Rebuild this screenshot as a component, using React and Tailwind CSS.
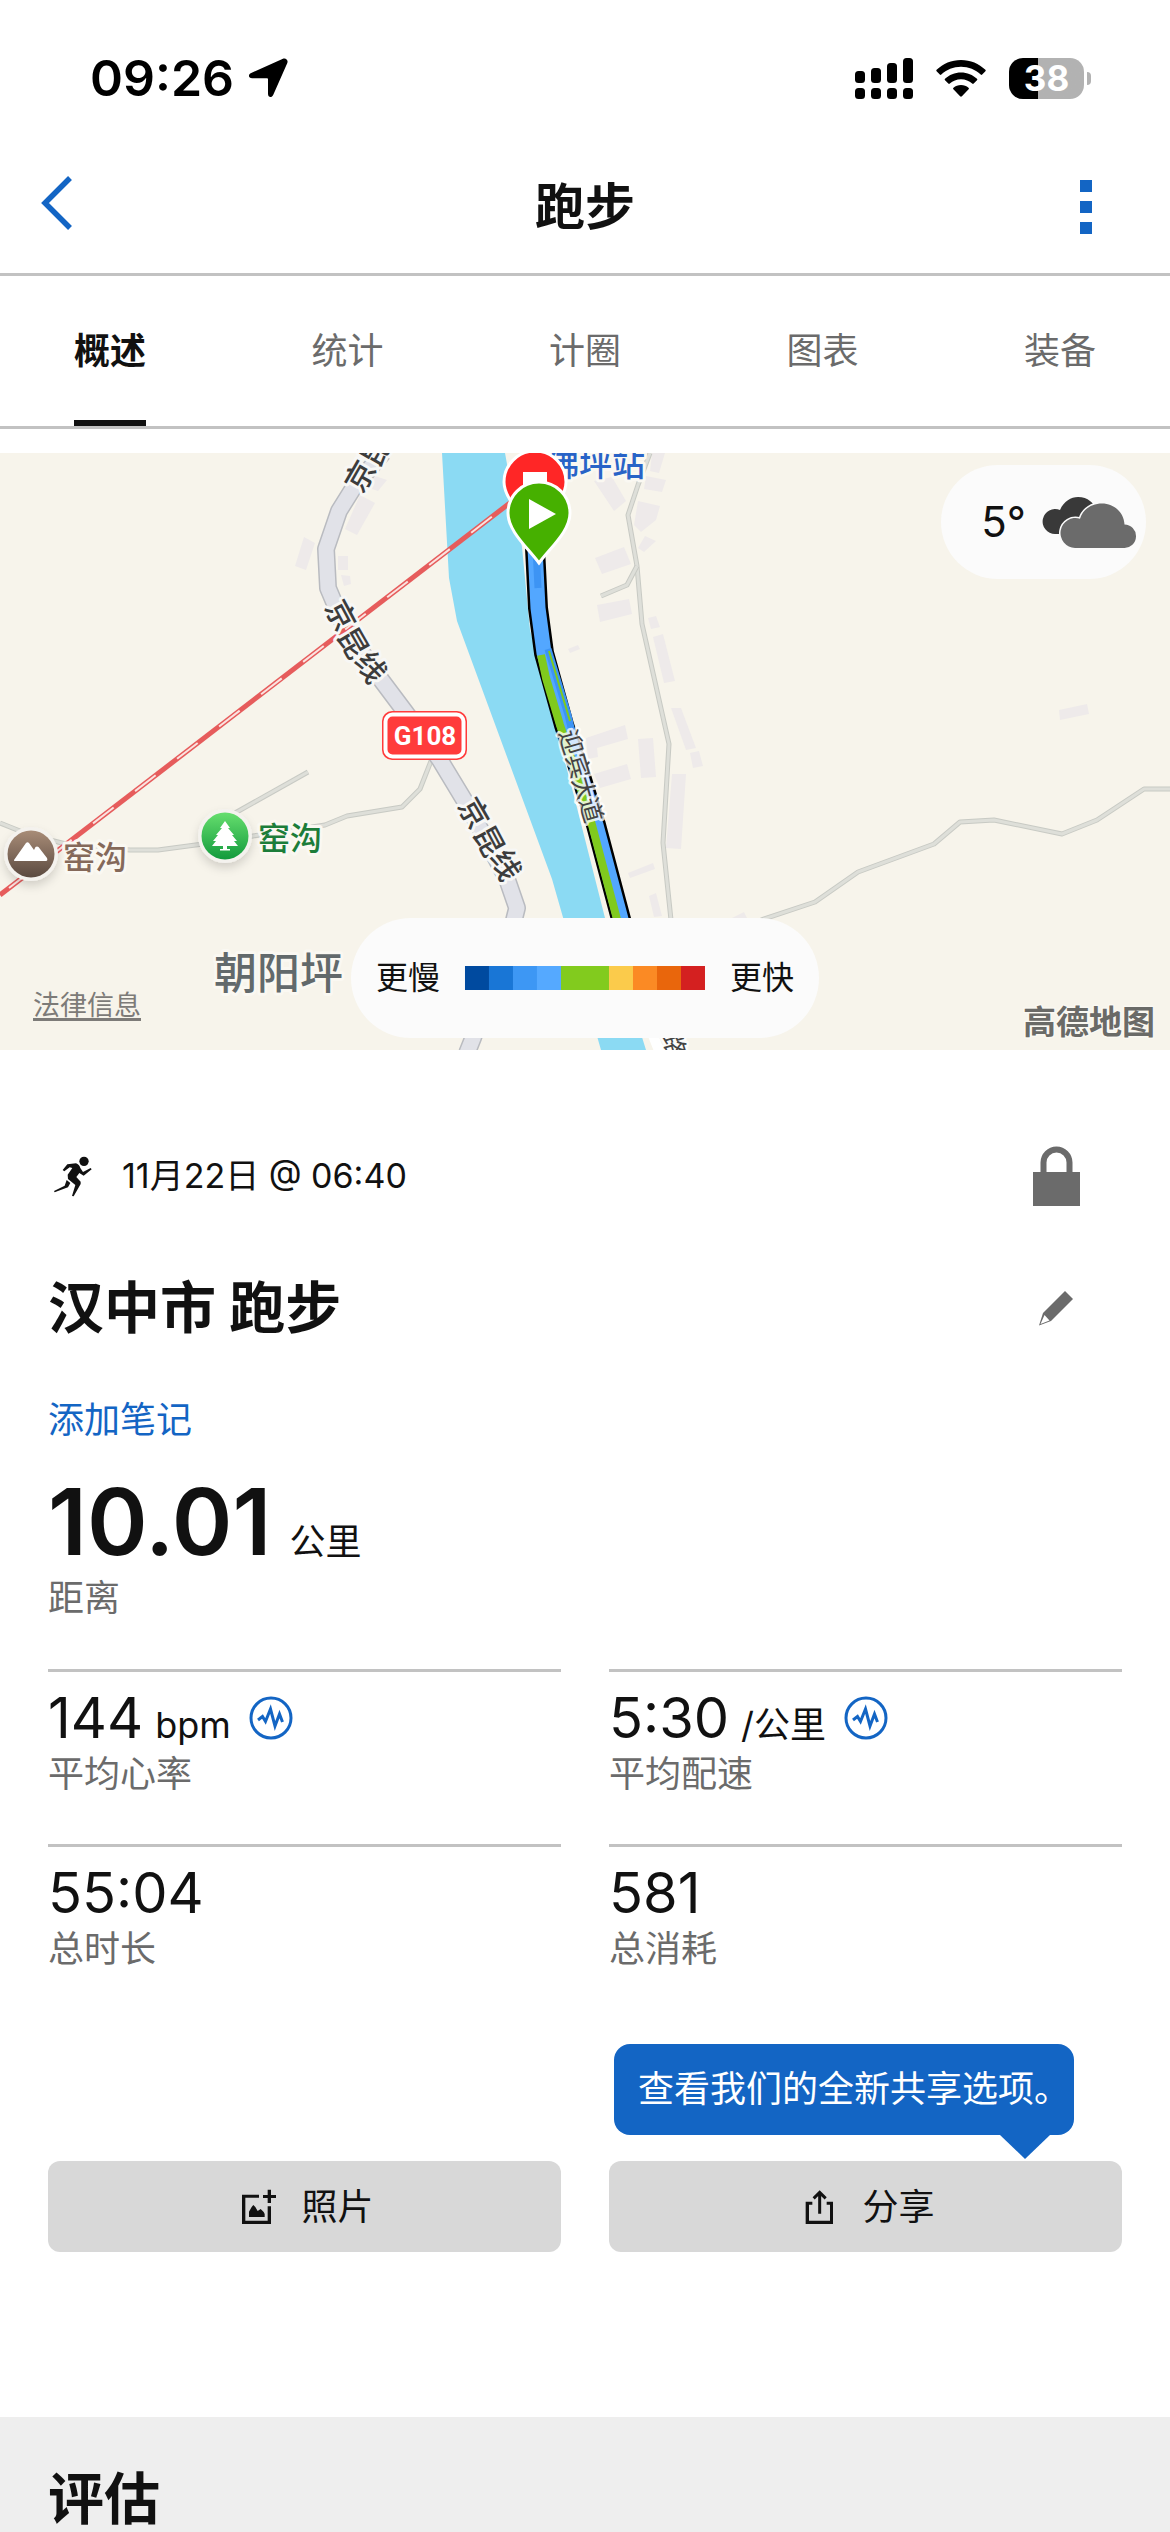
import { useState } from 'react';
import clsx from 'clsx';

const tabs = ['概述', '统计', '计圈', '图表', '装备'];

const stats = [
  { value: '144', unit: 'bpm', label: '平均心率', hasChart: true },
  { value: '5:30', unit: '/公里', label: '平均配速', hasChart: true },
  { value: '55:04', label: '总时长' },
  { value: '581', label: '总消耗' },
];

const StatusBar = () => (
  <div className="flex h-[156px] items-center justify-between pl-[90px] pr-[79px] text-black">
    <div className="flex items-center gap-[14px]">
      <span className="text-[50px] leading-[60px] font-semibold">09:26</span>
      <svg className="h-10 w-10" viewBox="0 0 40 40" fill="currentColor">
        <path d="M38.6 1.4c1.2 1.1 1.2 2.4.5 4.2L25.300 36.800c-1.600 3.500-5.300 2.800-5.300-1V21.500c0-.8-.4-1.200-1.200-1.200H4.200c-3.800 0-4.500-3.700-1-5.300L34.400 1C36.200.2 37.600.4 38.600 1.400z" />
      </svg>
    </div>
    <div className="flex items-center gap-[23px]">
      <svg className="h-[41px] w-[58px]" viewBox="0 0 58 41" fill="currentColor">
        <rect x="0" y="13" width="10" height="12" rx="3.5" />
        <rect x="16" y="10" width="10" height="15" rx="3.5" />
        <rect x="32" y="5" width="10" height="20" rx="3.5" />
        <rect x="48" y="0" width="10" height="25" rx="3.5" />
        <rect x="0" y="30" width="10" height="11" rx="3.5" />
        <rect x="16" y="30" width="10" height="11" rx="3.5" />
        <rect x="32" y="30" width="10" height="11" rx="3.5" />
        <rect x="48" y="30" width="10" height="11" rx="3.5" />
      </svg>
      <svg className="h-[37px] w-[50px]" viewBox="0 0 50 37" fill="currentColor">
        <path d="M25 0C15.500 0 7 3.700.6 9.800c-.5.500-.5 1 0 1.500l3.200 3.200c.5.500 1 .5 1.500 0C10.500 9.700 17.400 6.800 25 6.800s14.500 2.900 19.700 7.700c.5.500 1 .5 1.500 0l3.200-3.200c.5-.5.5-1 0-1.500C43 3.700 34.500 0 25 0z" />
        <path d="M25 12.500c-6.200 0-11.800 2.400-16 6.300-.5.500-.5 1 0 1.500l3.300 3.300c.5.500 1 .5 1.500 0 3-2.700 6.900-4.300 11.200-4.300s8.200 1.600 11.200 4.300c.5.500 1 .5 1.500 0l3.300-3.300c.5-.5.5-1 0-1.500-4.200-3.900-9.800-6.300-16-6.300z" />
        <path d="M25 25c-2.900 0-5.500 1-7.500 2.700-.6.500-.6 1.100-.1 1.600l6.700 6.900c.6.600 1.200.6 1.800 0l6.700-6.900c.5-.5.500-1.100-.1-1.600C30.500 26 27.900 25 25 25z" />
      </svg>
      <div className="flex items-center gap-[3px]">
        <div className="flex h-[41px] w-[75px] items-center justify-center rounded-[14px] bg-linear-to-r from-black from-[39%] to-[#b2b2b2] to-[39%] text-[35px] leading-[41px] font-bold text-white">
          38
        </div>
        <div className="h-[13px] w-[4px] rounded-r-full bg-[#b2b2b2]" />
      </div>
    </div>
  </div>
);

const Header = () => (
  <header className="grid h-[120px] grid-cols-3 items-center border-b-[3px] border-[#c2c2c2] pr-[78px] pl-10 pb-4">
    <button type="button" aria-label="返回" className="flex h-16 w-16 items-center justify-self-start pb-2">
      <svg className="h-[54px] w-8 text-[#1365c4]" viewBox="0 0 32 54" fill="none" stroke="currentColor" strokeWidth="5.5">
        <path d="M30 2 5 27l25 25" />
      </svg>
    </button>
    <h1 className="pl-[38px] text-center text-[50px] leading-[60px] font-bold">跑步</h1>
    <button type="button" aria-label="更多" className="flex h-16 w-16 flex-col items-end justify-center gap-[9px] justify-self-end">
      <span className="h-3 w-3 bg-[#1365c4]" />
      <span className="h-3 w-3 bg-[#1365c4]" />
      <span className="h-3 w-3 bg-[#1365c4]" />
    </button>
  </header>
);

const buildings = [
  '372,22 387,27 378,38 366,34', '360,42 375,50 357,82 345,76', '304,84 315,90 306,117 295,113',
  '338,103 348,103 348,117 338,117', '341,122 350,123 351,131 344,133', '652,0 665,0 659,20 650,18',
  '646,23 666,27 662,39 644,36', '638,48 660,53 656,67 641,79 634,72', '594,28 612,24 626,48 614,58',
  '595,105 624,94 631,111 602,121', '597,152 629,146 632,161 600,169', '645,83 656,88 644,99 638,95',
  '648,165 656,163 660,174 651,176', '653,184 663,181 675,228 664,230', '671,255 681,255 696,295 686,297',
  '690,300 699,298 703,313 693,315', '638,286 653,285 656,324 641,325', '672,321 686,321 681,396 666,395',
  '586,285 625,272 628,286 597,295 598,304 588,306', '594,321 627,311 631,326 600,335',
  '628,420 653,410 655,416 630,425', '649,443 656,440 662,463 654,464', '1059,257 1087,251 1089,261 1060,267',
  '568,196 578,192 580,196 570,200', '732,465 744,459 747,465',
];

const minorRoads = [
  '0,370 30,382 70,392 130,397 158,397 203,391 253,383 325,372 347,363 402,354 420,336 431,308',
  '308,319 235,360',
  '650,0 638,32 628,62 637,113 642,171 669,291 663,390 671,467',
  '637,113 627,132 601,143',
  '1170,336 1144,336 1097,367 1062,381 994,367 960,369 934,391 858,419 815,449 761,467',
];

const highway = '383,0 354,34 339,58 326,96 328,135 344,173 379,224 406,260 440,307 469,355 507,426 517,455 512,475 473,585 467,600';
const track = '535,95 538,155 544,200 564,272 580,320 596,372 622,470';

const RouteMap = () => (
  <svg className="h-full w-full" viewBox="0 0 1170 597" preserveAspectRatio="xMidYMid slice">
    <defs>
      <linearGradient id="peak" x1="0" y1="0" x2="0" y2="1">
        <stop offset="0" stopColor="#a88c77" />
        <stop offset="1" stopColor="#5b4a40" />
      </linearGradient>
      <linearGradient id="park" x1="0" y1="0" x2="0" y2="1">
        <stop offset="0" stopColor="#66de6e" />
        <stop offset="1" stopColor="#129a3c" />
      </linearGradient>
      <filter id="shade" x="-50%" y="-50%" width="200%" height="200%">
        <feDropShadow dx="0" dy="5" stdDeviation="5" floodOpacity="0.15" />
      </filter>
    </defs>
    <rect width="1170" height="597" fill="#f7f4eb" />
    <path d="M442 0 449 125 457 168 552 426 601 597H646L605 465 574 343 530 177 522 94 505 0z" fill="#8bdaf3" />
    {buildings.map((points) => (
      <polygon key={points} points={points} fill="#eeeaea" />
    ))}
    <g fill="none" strokeLinejoin="round">
      {minorRoads.map((points) => (
        <g key={points}>
          <polyline points={points} stroke="#c8cac4" strokeWidth="5" />
          <polyline points={points} stroke="#dedfd9" strokeWidth="3" />
        </g>
      ))}
      <path d="m652 580 8 20" stroke="#fff" strokeWidth="10" />
      <polyline points={highway} stroke="#b9bbc0" strokeWidth="18" />
      <polyline points={highway} stroke="#e1e2e8" strokeWidth="15" />
      {/* railway */}
      <path d="M0 442 515 46" stroke="#e65c5c" strokeWidth="5" />
      <path d="M9 435 515 46" stroke="#fbe3e0" strokeWidth="2" strokeDasharray="26 27" />
      {/* pace coloured track */}
      <polyline points={track} stroke="#000" strokeWidth="20" />
      <polyline points={track} stroke="#53a7ff" strokeWidth="15" />
      <path d="M536 95 538 135M548 196 568 262 577 300" stroke="#3d94f4" strokeWidth="7" />
      <path d="M541 202 546 225 560 272 576 320 592 372 618 470" stroke="#80ca1e" strokeWidth="8" />
      <path d="M549 198 570 268" stroke="#80ca1e" strokeWidth="2" />
    </g>

    <g fontSize="30" fontWeight="500" fill="#3c3c3c" stroke="#f7f7f5" strokeWidth="6" strokeLinejoin="round" paintOrder="stroke" textAnchor="middle">
      <text transform="translate(360 23) rotate(-60)" dy="11">京</text>
      <text transform="translate(376 -2) rotate(-60)" dy="11">昆</text>
      <text transform="translate(341 162) rotate(62)" dy="11">京</text>
      <text transform="translate(353 190) rotate(60)" dy="11">昆</text>
      <text transform="translate(371 214) rotate(56)" dy="11">线</text>
      <text transform="translate(474 360) rotate(60)" dy="11">京</text>
      <text transform="translate(489 388) rotate(62)" dy="11">昆</text>
      <text transform="translate(506 412) rotate(64)" dy="11">线</text>
    </g>
    <g fontSize="25" fill="#444" stroke="#ffffff" strokeOpacity="0.8" strokeWidth="5" strokeLinejoin="round" paintOrder="stroke" textAnchor="middle">
      <text transform="translate(571 289) rotate(74)" dy="9">迎</text>
      <text transform="translate(578 313) rotate(74)" dy="9">宾</text>
      <text transform="translate(584 336) rotate(74)" dy="9">大</text>
      <text transform="translate(591 357) rotate(74)" dy="9">道</text>
      <text transform="translate(674 591) rotate(74)" dy="9">路</text>
    </g>

    <rect x="382" y="258" width="85" height="49" rx="10" fill="#ff3b3b" />
    <rect x="385.5" y="261.5" width="78" height="42" rx="7" fill="none" stroke="#fff" strokeWidth="4" />
    <text x="425" y="292" className="font-[Roboto,sans-serif]" fontSize="26" fontWeight="700" fill="#fff" textAnchor="middle">G108</text>

    <g strokeLinejoin="round" paintOrder="stroke" stroke="#faf8f2" strokeWidth="6" fontWeight="500">
      <text x="546" y="23" fontSize="33" fill="#2863c7">佛坪站</text>
      <text x="63" y="416" fontSize="32" fill="#85695a">窑沟</text>
      <text x="258" y="397" fontSize="32" fill="#1c7d3a">窑沟</text>
      <text x="214" y="536" fontSize="43" fill="#62696b">朝阳坪</text>
      <text x="1023" y="581" fontSize="33" fontWeight="700" strokeWidth="3" fill="#6a6a67">高德地图</text>
    </g>

    <g filter="url(#shade)">
      <circle cx="31" cy="401" r="27" fill="#f4f2ee" />
      <circle cx="225" cy="383" r="27" fill="#f4f2ee" />
    </g>
    <circle cx="31" cy="401" r="23.5" fill="url(#peak)" />
    <path d="M14 407 26 390q1.500-1.500 3 0l5 7 1.500-3q1.500-1 3 0L47 405q1 3-1 3H15q-1.500 0-1-1z" fill="#fff" />
    <circle cx="225" cy="383" r="23.5" fill="url(#park)" />
    <path d="m225 368 5 7h-2l6 7h-2l5 6h-3l4 5h-11v3h3v1.500h-10V396h3v-3h-11l4-5h-3l5-6h-2l6-7h-2z" fill="#fff" />

    <path d="M535 -2a31 31 0 0 1 31 31c0 17-19 33-31 50c-12-17-31-33-31-50a31 31 0 0 1 31-31z" fill="#ff2626" stroke="#fff" strokeWidth="3" />
    <rect x="523" y="19" width="24" height="24" fill="#fff" />
    <path d="M539 29a31 31 0 0 1 31 31c0 18-19 34-31 50c-12-16-31-32-31-50a31 31 0 0 1 31-31z" fill="#46b000" stroke="#fff" strokeWidth="3" />
    <path d="m529 46 27 15-27 15z" fill="#fff" />
  </svg>
);

const WeatherBadge = () => (
  <div className="absolute top-3 right-6 flex h-[114px] items-center gap-4 rounded-full bg-[#fbfbfb] pr-[10px] pl-10">
    <span className="text-[42px] leading-[48px]">5°</span>
    <svg className="h-[51px] w-[94px]" viewBox="0 0 94 51">
      <path d="M13 37a12.500 12.500 0 1 1 5-24C22 4 29 0 36 0c10 0 16 6 18 13L40 37z" fill="#393939" />
      <path d="M33 51a15 15 0 1 1 5-29.300C41 12 50 6.500 60 6.500c12 0 22 9 22.500 21A11.700 11.700 0 0 1 82 51z" fill="#6b6b6b" stroke="#fbfbfb" strokeWidth="3" paintOrder="stroke" />
    </svg>
  </div>
);

const PaceLegend = () => (
  <div className="absolute bottom-3 left-1/2 flex h-[120px] -translate-x-1/2 items-center gap-[25px] rounded-full bg-[#fbfbfb] px-[25px] text-[32px] leading-[48px] whitespace-nowrap">
    <span>更慢</span>
    <div className="flex h-6">
      <span className="w-6 bg-[#004a9f]" />
      <span className="w-6 bg-[#1976d6]" />
      <span className="w-6 bg-[#3d97f4]" />
      <span className="w-6 bg-[#55a9ff]" />
      <span className="w-12 bg-[#82cb1e]" />
      <span className="w-6 bg-[#fbcb4b]" />
      <span className="w-6 bg-[#fb8a24]" />
      <span className="w-6 bg-[#e9660c]" />
      <span className="w-6 bg-[#d42020]" />
    </div>
    <span>更快</span>
  </div>
);

const StatCard = ({ value, unit, label, hasChart }) => (
  <div className="border-t-[3px] border-[#c2c2c2] pt-4 pb-[46px]">
    <div className="flex h-[60px] items-center">
      <p className="flex items-baseline gap-3 leading-[60px]">
        <span className="text-[56px]">{value}</span>
        {unit && <span className="text-[36px] leading-[36px]">{unit}</span>}
      </p>
      {hasChart && (
        <button type="button" aria-label={`${label}图表`} className="ml-[18px]">
          <svg className="h-11 w-11 text-[#1365c4]" viewBox="0 0 44 44" fill="none" stroke="currentColor" strokeWidth="3">
            <circle cx="22" cy="22" r="20" />
            <path d="m9 24 4.500-3.500 3 5L21.500 13l4.500 17L30.500 18l3 8" />
          </svg>
        </button>
      )}
    </div>
    <p className="mt-[2px] text-[36px] leading-[48px] text-[#6b6b6b]">{label}</p>
  </div>
);

const App = () => {
  const [activeTab, setActiveTab] = useState('概述');

  return (
    <div className="min-h-screen overflow-hidden bg-white font-[Inter,'Noto_Sans_CJK_SC',sans-serif] text-[#111111]">
      <StatusBar />
      <Header />

      <nav className="flex h-[153px] justify-between border-b-[3px] border-[#c2c2c2] px-[74px]">
        {tabs.map((tab) => (
          <button
            key={tab}
            type="button"
            onClick={() => setActiveTab(tab)}
            className={clsx(
              'border-y-[6px] border-t-transparent text-[36px] leading-[48px]',
              tab === activeTab ? 'border-b-[#111111] font-bold' : 'border-b-transparent text-[#6b6b6b]'
            )}
          >
            {tab}
          </button>
        ))}
      </nav>

      {/* Map */}
      <section className="relative mt-6 h-[597px] overflow-hidden">
        <RouteMap />
        <WeatherBadge />
        <PaceLegend />
        <a href="#legal" className="absolute bottom-6 left-[33px] text-[27px] leading-[40px] text-[#7d7b78] underline decoration-[3px] underline-offset-[3px]">
          法律信息
        </a>
      </section>

      <main className="px-12 pt-24">
        <div className="flex h-[60px] items-center justify-between">
          <div className="flex items-center gap-4">
            <svg className="h-[60px] w-[58px]" viewBox="6 0 174 180" fill="currentColor">
              <circle cx="114" cy="46" r="14" />
              <path d="M50 72 64 55l26-3q10 3 13 14l8 12 23-12 3 4-24 19-13-8-9 12 13 14v7L83 151l-5-1 10-33-22-18-1-13 14-20-8-2-16 12z" />
              <path d="m62 102 11 9-7 13-40 15-2-4 32-16z" />
            </svg>
            <p className="text-[34px] leading-[48px]">11月22日 @ 06:40</p>
          </div>
          <button type="button" aria-label="隐私" className="mr-[18px] flex w-24 justify-center text-[#6b6b6b]">
            <svg className="h-[60px] w-[47px]" viewBox="0 0 47 60" fill="currentColor">
              <path d="M0 26h47v34H0z" />
              <path d="M10.500 27V16.500a13 13 0 0 1 26 0V27" fill="none" stroke="currentColor" strokeWidth="6" />
            </svg>
          </button>
        </div>

        <div className="mt-[66px] flex items-center justify-between">
          <h2 className="text-[56px] leading-[72px] font-bold">汉中市 跑步</h2>
          <button type="button" aria-label="编辑" className="mr-[18px] flex w-24 justify-center text-[#6b6b6b]">
            <svg className="h-[35px] w-[34px]" viewBox="0 0 34 35" fill="currentColor">
              <path fillRule="evenodd" d="M26 0l8 8-22 22-12 4.500L4 22zM5.500 24l-4 9 9-3.500z" />
            </svg>
          </button>
        </div>

        <button type="button" className="mt-[52px] block text-[36px] leading-[48px] text-[#1365c4]">
          添加笔记
        </button>

        <p className="mt-[33px] flex items-baseline gap-[18px]">
          <span className="text-[92px] leading-[90px] font-semibold">10.01</span>
          <span className="text-[36px] leading-[36px]">公里</span>
        </p>
        <p className="mt-[7px] text-[36px] leading-[48px] text-[#6b6b6b]">距离</p>

        <div className="mt-[47px] grid grid-cols-2 gap-x-12">
          {stats.map((stat) => (
            <StatCard key={stat.label} {...stat} />
          ))}
        </div>

        <div className="mt-[142px] grid grid-cols-2 gap-x-12">
          <button type="button" className="flex h-[91px] items-center justify-center gap-[10px] rounded-xl bg-[#d8d8d8] pr-1 text-[36px] leading-[48px]">
            <svg className="h-[60px] w-[60px]" viewBox="0 0 180 180" fill="currentColor">
              <path d="M33 53h51v9H43v69h67V88h10v53H33z" />
              <path d="M110 38h10v16h15v9h-15v15h-10V63H96v-9h14z" />
              <path d="M54 120v-16l8-14 5-6 6 6 7 12 9-6 9 9 3 6v9z" />
            </svg>
            照片
          </button>
          <div className="relative">
            <button type="button" className="flex h-[91px] w-full items-center justify-center gap-[10px] rounded-xl bg-[#d8d8d8] pr-1 text-[36px] leading-[48px]">
              <svg className="h-[60px] w-[60px]" viewBox="0 0 180 180" fill="currentColor">
                <path d="M41 74h20v9H51v48h63V83h-10v-9h19v67H41z" />
                <path d="M83 110V48M65 64l18-18 18 18" fill="none" stroke="currentColor" strokeWidth="9" />
              </svg>
              分享
            </button>
            <div role="tooltip" className="absolute right-12 bottom-full mb-[26px] rounded-2xl bg-[#1365c4] py-[22px] pr-1 pl-6 text-[36px] leading-[47px] whitespace-nowrap text-white">
              查看我们的全新共享选项。
              <svg className="absolute top-full right-6 h-6 w-[50px] text-[#1365c4]" viewBox="0 0 50 24" fill="currentColor">
                <path d="M0 0h50L25 24z" />
              </svg>
            </div>
          </div>
        </div>
      </main>

      <section className="mt-[165px] bg-[#eeeeee] px-12 pt-[49px]">
        <h2 className="text-[56px] leading-[66px] font-bold">评估</h2>
      </section>
    </div>
  );
};

export default App;
